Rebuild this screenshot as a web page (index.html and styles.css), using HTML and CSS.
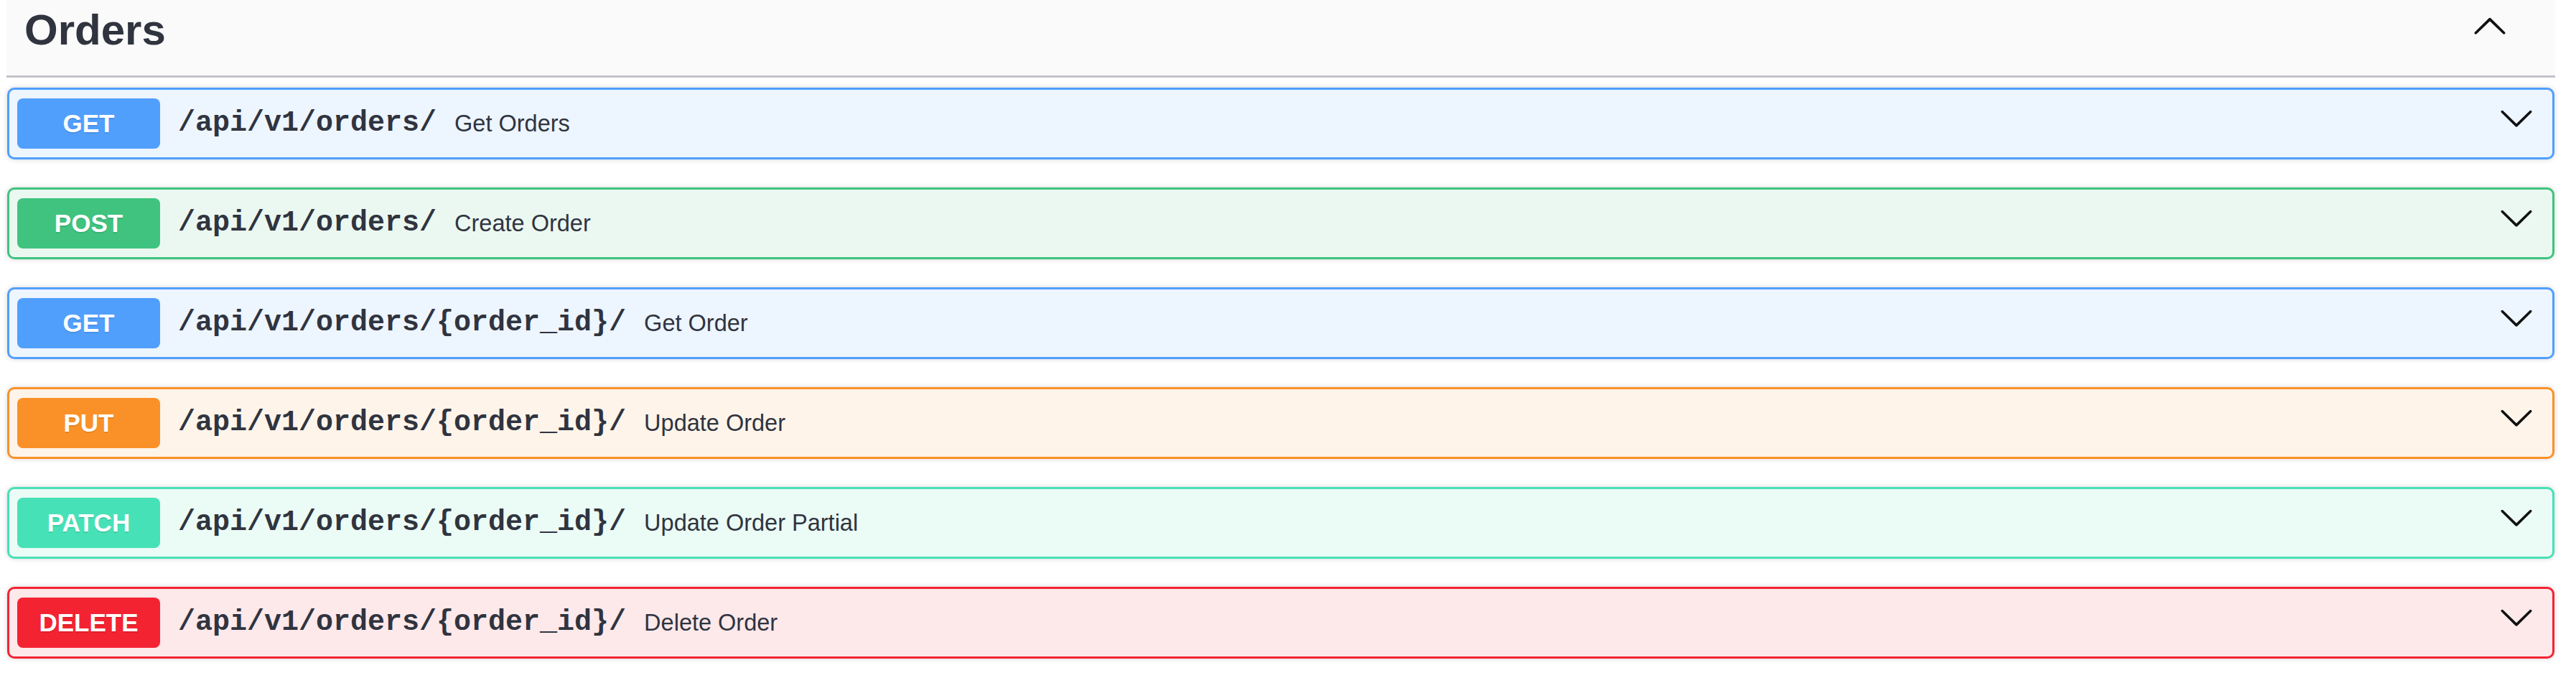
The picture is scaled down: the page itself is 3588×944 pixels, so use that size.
FILE: index.html
```html
<!DOCTYPE html>
<html lang="en">
<head>
<meta charset="utf-8">
<title>Orders</title>
<link rel="stylesheet" href="styles.css">
</head>
<body>
<div class="wrapper">
  <div class="tag">
    <h3 class="tag-title">Orders</h3>
    <svg class="arrow" viewBox="0 0 20 20" width="50" height="50" aria-hidden="true"><path d="M17.418 14.908c.272.268.709.268.979 0s.27-.701 0-.969l-7.908-7.83c-.27-.268-.707-.268-.979 0l-7.908 7.83c-.27.268-.27.701 0 .969.271.268.709.268.979 0L10 7.767l7.418 7.141z"/></svg>
  </div>

  <div class="op op-get">
    <span class="method">GET</span>
    <span class="path">/api/v1/orders/</span>
    <span class="desc">Get Orders</span>
    <svg class="arrow op-arrow" viewBox="0 0 20 20" width="50" height="50" aria-hidden="true"><path d="M17.418 6.109c.272-.268.709-.268.979 0s.271.701 0 .969l-7.908 7.83c-.27.268-.707.268-.979 0l-7.908-7.83c-.27-.268-.27-.701 0-.969.271-.268.709-.268.979 0L10 13.25l7.418-7.141z"/></svg>
  </div>

  <div class="op op-post">
    <span class="method">POST</span>
    <span class="path">/api/v1/orders/</span>
    <span class="desc">Create Order</span>
    <svg class="arrow op-arrow" viewBox="0 0 20 20" width="50" height="50" aria-hidden="true"><path d="M17.418 6.109c.272-.268.709-.268.979 0s.271.701 0 .969l-7.908 7.83c-.27.268-.707.268-.979 0l-7.908-7.830c-.27-.268-.27-.701 0-.969.271-.268.709-.268.979 0L10 13.25l7.418-7.141z"/></svg>
  </div>

  <div class="op op-get">
    <span class="method">GET</span>
    <span class="path">/api/v1/orders/{order_id}/</span>
    <span class="desc">Get Order</span>
    <svg class="arrow op-arrow" viewBox="0 0 20 20" width="50" height="50" aria-hidden="true"><path d="M17.418 6.109c.272-.268.709-.268.979 0s.271.701 0 .969l-7.908 7.83c-.27.268-.707.268-.979 0l-7.908-7.83c-.27-.268-.27-.701 0-.969.271-.268.709-.268.979 0L10 13.25l7.418-7.141z"/></svg>
  </div>

  <div class="op op-put">
    <span class="method">PUT</span>
    <span class="path">/api/v1/orders/{order_id}/</span>
    <span class="desc">Update Order</span>
    <svg class="arrow op-arrow" viewBox="0 0 20 20" width="50" height="50" aria-hidden="true"><path d="M17.418 6.109c.272-.268.709-.268.979 0s.271.701 0 .969l-7.908 7.83c-.27.268-.707.268-.979 0l-7.908-7.83c-.27-.268-.27-.701 0-.969.271-.268.709-.268.979 0L10 13.25l7.418-7.141z"/></svg>
  </div>

  <div class="op op-patch">
    <span class="method">PATCH</span>
    <span class="path">/api/v1/orders/{order_id}/</span>
    <span class="desc">Update Order Partial</span>
    <svg class="arrow op-arrow" viewBox="0 0 20 20" width="50" height="50" aria-hidden="true"><path d="M17.418 6.109c.272-.268.709-.268.979 0s.271.701 0 .969l-7.908 7.83c-.27.268-.707.268-.979 0l-7.908-7.83c-.27-.268-.27-.701 0-.969.271-.268.709-.268.979 0L10 13.25l7.418-7.141z"/></svg>
  </div>

  <div class="op op-delete">
    <span class="method">DELETE</span>
    <span class="path">/api/v1/orders/{order_id}/</span>
    <span class="desc">Delete Order</span>
    <svg class="arrow op-arrow" viewBox="0 0 20 20" width="50" height="50" aria-hidden="true"><path d="M17.418 6.109c.272-.268.709-.268.979 0s.271.701 0 .969l-7.908 7.83c-.27.268-.707.268-.979 0l-7.908-7.83c-.27-.268-.27-.701 0-.969.271-.268.709-.268.979 0L10 13.25l7.418-7.141z"/></svg>
  </div>
</div>
</body>
</html>
```

FILE: styles.css
```css
* { box-sizing: border-box; }

html, body {
  margin: 0;
  padding: 0;
  background: #ffffff;
}

body {
  font-family: "Liberation Sans", Arial, sans-serif;
  line-height: 1.15;
  color: #333846;
}

.wrapper {
  width: 3550px;
  margin-left: 9px;
}

.tag {
  display: flex;
  align-items: flex-start;
  height: 108px;
  padding: 7px 66px 0 25px;
  background: #fafafa;
  border-bottom: 3px solid #c2c3c8;
  margin-bottom: 14px;
}

.tag-title {
  flex: 1;
  margin: 0;
  font-size: 60px;
  font-weight: 700;
  line-height: 69px;
  color: #30343f;
}

.arrow {
  flex: none;
  fill: #111111;
  margin-top: 3px;
}

.op {
  display: flex;
  align-items: center;
  height: 100px;
  margin: 0 1px 39px 1px;
  padding: 12px 25px 12px 11px;
  border: 3px solid;
  border-radius: 10px;
  box-shadow: 0 0 7px rgba(0, 0, 0, 0.17);
}

.method {
  flex: none;
  width: 199px;
  height: 70px;
  padding: 15px 0;
  border-radius: 8px;
  font-size: 35px;
  font-weight: 700;
  line-height: 40px;
  text-align: center;
  color: #ffffff;
  text-shadow: 0 2px 0 rgba(0, 0, 0, 0.1);
}

.path {
  flex: none;
  padding: 0 25px;
  font-family: "Liberation Mono", "Courier New", monospace;
  font-size: 40px;
  font-weight: 700;
  line-height: 46px;
  color: #30343f;
}

.desc {
  flex: 1;
  font-size: 32.5px;
  line-height: 37px;
  color: #30343f;
}

.op-arrow {
  align-self: flex-start;
  margin-top: 2px;
}

.op-get { background: #edf5ff; border-color: #519ffd; }
.op-get .method { background: #519ffd; }

.op-post { background: #ebf8f1; border-color: #3fc37f; }
.op-post .method { background: #3fc37f; }

.op-put { background: #fef4ea; border-color: #fa9128; }
.op-put .method { background: #fa9128; }

.op-patch { background: #ebfbf5; border-color: #47e1b7; }
.op-patch .method { background: #47e1b7; }

.op-delete { background: #fde8ea; border-color: #f42332; }
.op-delete .method { background: #f42332; }
```
